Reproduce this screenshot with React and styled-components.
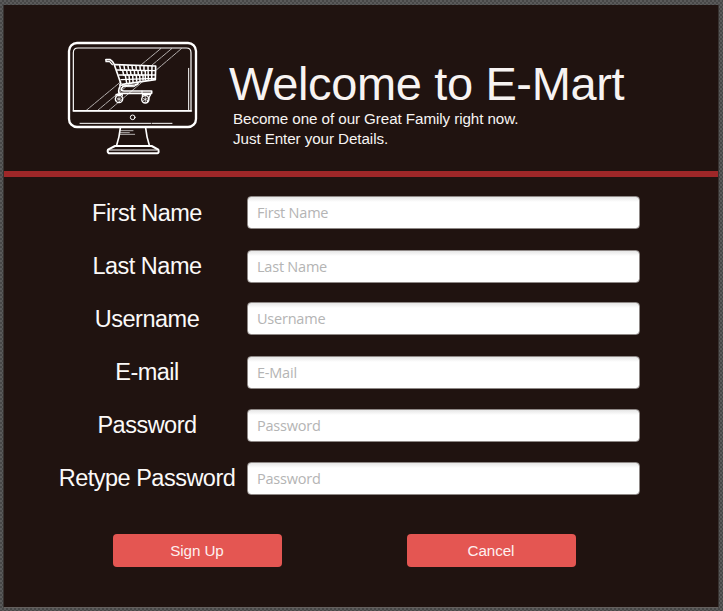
import React from "react";
import styled, { createGlobalStyle } from "styled-components";

const GlobalStyle = createGlobalStyle`
  * { box-sizing: border-box; }
  body { margin: 0; background: #515151; }
`;

const Backdrop = styled.div`
  width: 723px;
  height: 611px;
  padding: 5px 4px 3px 3px;
  background: repeating-conic-gradient(#474747 0% 25%, #5a5a5a 0% 50%) 0 0 / 4px 4px;
  font-family: "Liberation Sans", Arial, sans-serif;
`;

const Panel = styled.main`
  height: 603px;
  overflow: hidden;
  background: #201310;
  border-left: 1px solid #373230;
  border-right: 1px solid #373230;
  border-bottom: 1px solid #65605e;
`;

const Header = styled.header`
  display: flex;
  height: 166px;
  padding: 29px 0 0 56px;
`;

const Logo = styled.svg`
  width: 145px;
  height: 125px;
  flex: none;
`;

const Heading = styled.div`
  padding: 23px 0 0 24px;
  color: #f7f3f2;
  white-space: nowrap;
`;

const Title = styled.h1`
  margin: 0;
  font-size: 47px;
  font-weight: 400;
  letter-spacing: -0.36px;
  line-height: 53px;
`;

const Subtitle = styled.p`
  margin: -1px 0 0 4px;
  font-size: 15.2px;
  letter-spacing: -0.08px;
  line-height: 20px;
`;

const Divider = styled.div`
  height: 6px;
  background: #9e2728;
`;

const Form = styled.form`
  padding-top: 10px;
`;

const Row = styled.div`
  display: grid;
  grid-template-columns: 200px 393px;
  column-gap: 0;
  height: 53px;
  padding-left: 43px;
  align-items: start;
`;

const Label = styled.label`
  padding-top: 12px;
  text-align: center;
  color: #fbf9f8;
  font-size: 23.5px;
  letter-spacing: -0.5px;
  line-height: 28px;
  white-space: nowrap;
`;

const Input = styled.input`
  width: 393px;
  height: 33px;
  margin: ${(p) => p.$top}px 0 0;
  padding: 0 9px 1px;
  border: 1px solid #8e8886;
  border-radius: 4px;
  background: linear-gradient(#e6e6e6, #fff 5px);
  color: #333;
  font-family: "Open Sans", "Noto Sans", sans-serif;
  font-size: 14.5px;
  letter-spacing: -0.22px;
  outline: none;
  &::placeholder { color: #b4b4b4; opacity: 1; }
`;

const Actions = styled.div`
  display: flex;
  gap: 125px;
  padding: 29px 0 0 109px;
`;

const Button = styled.button`
  width: 169px;
  height: 33px;
  padding: 1px 1px 0 0;
  border: 0;
  border-radius: 4px;
  background: #e45652;
  color: #fdf0ef;
  font: 15.2px/32px "Liberation Sans", Arial, sans-serif;
  letter-spacing: -0.08px;
`;

const FIELDS = [
  { id: "first", label: "First Name", hint: "First Name", top: 9 },
  { id: "last", label: "Last Name", hint: "Last Name", top: 10 },
  { id: "user", label: "Username", hint: "Username", top: 9 },
  { id: "mail", label: "E-mail", hint: "E-Mail", top: 10 },
  { id: "pass", label: "Password", hint: "Password", top: 10 },
  { id: "again", label: "Retype Password", hint: "Password", top: 10 },
];

function MonitorCart() {
  return (
    <Logo viewBox="0 0 435 375" fill="none" stroke="#fff" strokeLinecap="round" strokeLinejoin="round">
      <rect x="27" y="27" width="381" height="252" rx="24" strokeWidth="7" />
      <path d="M40 230V56Q40 42 54 42H379Q393 42 393 56V230Z" strokeWidth="3.5" />
      <path d="M40 231H394" strokeWidth="5" />
      <path d="M386 103V229M60 268H273M277 268H336" strokeWidth="3" />
      <path d="M302 44L79 229M335 44L113 229M364 44L147 229" strokeWidth="2" strokeDasharray="17 3" />
      <path d="M166 92L287 96L286 137L187 151Z" fill="#201310" stroke="none" />
      <circle cx="218" cy="250" r="7" strokeWidth="3" />
      <path d="M181 282Q178 310 170 334M257 282Q260 310 268 334" strokeWidth="5" />
      <path d="M181 290H219M181 296H208M181 301H224" strokeWidth="2" />
      <path d="M165 336H275L295 347Q298 357 292 358H147Q141 355 144 347Z" strokeWidth="6" />
      <path d="M147 348H291" strokeWidth="3" />
      <path d="M138 77H151Q158 80 163 92L183 150" strokeWidth="5" />
      <path d="M138 77V83H149L157 92" strokeWidth="4" />
      <path d="M166 92L287 96L286 137L187 151" strokeWidth="5" />
      <path d="M171 108L286 110M177 123L286 123M183 137L286 133" strokeWidth="4" />
      <path d="M179 95L182 108L188 109L191 123L196 124L200 147M192 95L194 108L200 109L202 123L207 124L209 145M204 96L206 108L211 109L213 123L218 124L219 143M216 96L218 108L223 109L224 123L229 124L230 141M228 96L229 109L234 110L235 123L239 124L240 140M240 97L241 109L245 110V123L249 124V138M252 97V110L256 111V137M264 97L265 136M276 97L275 136" strokeWidth="4.5" />
      <path d="M180 151V158Q176 163 176 171L177 178H275V171H192Q181 171 184 164Q188 156 197 155L225 153L234 149" strokeWidth="5" />
      <path d="M182 154Q200 160 222 158L234 150M246 171V178" strokeWidth="3" />
      <g strokeWidth="4">
        <circle cx="177" cy="195" r="11" />
        <circle cx="256" cy="196" r="11" />
      </g>
      <path d="M177 187V202M170 192L184 199M170 199L184 191M256 188V203M249 193L263 200M249 200L263 192" strokeWidth="2" />
      <path d="M168 187V181H187V186M247 188V182H272L268 189L262 203" strokeWidth="3.5" />
    </Logo>
  );
}

export default function App() {
  return (
    <>
      <GlobalStyle />
      <Backdrop>
        <Panel>
          <Header>
            <MonitorCart />
            <Heading>
              <Title>Welcome to E-Mart</Title>
              <Subtitle>
                Become one of our Great Family right now.
                <br />
                Just Enter your Details.
              </Subtitle>
            </Heading>
          </Header>
          <Divider />
          <Form onSubmit={(e) => e.preventDefault()}>
            {FIELDS.map((f) => (
              <Row key={f.id}>
                <Label htmlFor={f.id}>{f.label}</Label>
                <Input id={f.id} placeholder={f.hint} $top={f.top} />
              </Row>
            ))}
            <Actions>
              <Button type="submit">Sign Up</Button>
              <Button type="button">Cancel</Button>
            </Actions>
          </Form>
        </Panel>
      </Backdrop>
    </>
  );
}
